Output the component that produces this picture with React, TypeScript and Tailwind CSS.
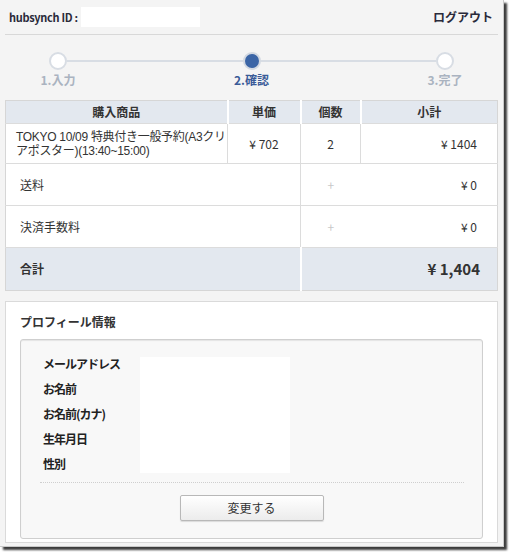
import React from 'react'

const font = "font-['Noto_Sans_CJK_JP','Liberation_Sans',sans-serif]"

const steps = [
  { label: '1.入力', active: false },
  { label: '2.確認', active: true },
  { label: '3.完了', active: false },
]

const profileLabels = ['メールアドレス', 'お名前', 'お名前(カナ)', '生年月日', '性別']

function Stepper() {
  return (
    <div className="mt-[17px] flex items-start px-[44px]">
      {steps.map((s, i) => (
        <React.Fragment key={s.label}>
          {i > 0 && <div className="mt-[8px] h-[2px] flex-1 bg-[#d8dde4]" />}
          <div className="flex w-[18px] flex-col items-center">
            <div
              className={
                s.active
                  ? 'h-[18px] w-[18px] rounded-full border-[2px] border-[#d3d9e2] bg-[#3b65a6]'
                  : 'h-[18px] w-[18px] rounded-full border-[2px] border-[#d8dde4] bg-white'
              }
            />
            <div
              className={
                s.active
                  ? 'mt-[3px] whitespace-nowrap text-[12px] leading-[14px] font-bold text-[#3a5b98]'
                  : 'mt-[3px] whitespace-nowrap text-[12px] leading-[14px] font-bold text-[#aab3c0]'
              }
            >
              {s.label}
            </div>
          </div>
        </React.Fragment>
      ))}
    </div>
  )
}

function OrderTable() {
  return (
    <table className="mt-[13px] w-[492px] table-fixed border-collapse border border-[#d6d6d6] text-[12px] text-[#333]">
      <colgroup>
        <col className="w-[222px]" />
        <col className="w-[73px]" />
        <col className="w-[60px]" />
        <col className="w-[137px]" />
      </colgroup>
      <thead>
        <tr className="h-[23px] bg-[#e3e8ef] font-bold">
          <th className="border-r-2 border-white">購入商品</th>
          <th className="border-r-2 border-white">単価</th>
          <th className="border-r-2 border-white">個数</th>
          <th>小計</th>
        </tr>
      </thead>
      <tbody className="bg-white">
        <tr className="h-[40px] border-t border-[#dcdcdc]">
          <td className="border-r border-[#dcdcdc] pl-[10px] font-['Liberation_Sans','Noto_Sans_CJK_JP',sans-serif] leading-[14px] tracking-[-0.3px] whitespace-nowrap">
            TOKYO 10/09 特典付き一般予約(A3クリ
            <br />
            アポスター)(13:40~15:00)
          </td>
          <td className="border-r border-[#dcdcdc] text-center">¥ 702</td>
          <td className="border-r border-[#dcdcdc] text-center">2</td>
          <td className="pr-[20px] text-right">¥ 1404</td>
        </tr>
        <tr className="h-[42px] border-t border-[#dcdcdc]">
          <td colSpan={2} className="border-r border-[#dcdcdc] pl-[14px]">送料</td>
          <td className="text-center text-[#c8c8c8]">+</td>
          <td className="pr-[20px] text-right">¥ 0</td>
        </tr>
        <tr className="h-[42px] border-t border-[#dcdcdc]">
          <td colSpan={2} className="border-r border-[#dcdcdc] pl-[14px]">決済手数料</td>
          <td className="text-center text-[#c8c8c8]">+</td>
          <td className="pr-[20px] text-right">¥ 0</td>
        </tr>
        <tr className="h-[43px] border-t border-[#dcdcdc] bg-[#e3e8ef] font-bold">
          <td colSpan={2} className="border-r-2 border-white pl-[14px]">合計</td>
          <td colSpan={2} className="pr-[17px] text-right text-[15px]">¥ 1,404</td>
        </tr>
      </tbody>
    </table>
  )
}

function Profile() {
  return (
    <div className="mt-[10px] border border-[#dadada] bg-white px-[14px] pt-[12px] pb-[3px]">
      <h2 className="text-[12px] leading-[16px] font-bold text-[#333]">プロフィール情報</h2>
      <div className="mt-[9px] rounded-[3px] border border-[#cfcfcf] bg-[#f8f8f8] pt-[11px] pb-[17px] shadow-[inset_0_1px_1px_rgba(0,0,0,0.08)]">
        <div className="flex pl-[22px]">
          <div className="w-[97px]">
            {profileLabels.map((l) => (
              <div key={l} className="h-[25px] text-[12px] leading-[25px] font-bold tracking-[-1px] text-[#222]">
                {l}
              </div>
            ))}
          </div>
          <div className="mt-[6px] h-[116px] w-[150px] bg-white" />
        </div>
        <div className="mt-[6px] ml-[19px] mr-[18px] border-t border-dotted border-[#cfcfcf]" />
        <div className="mt-[12px] flex justify-center">
          <button className="h-[26px] w-[144px] rounded-[2px] border border-[#b8b8b8] bg-gradient-to-b from-white to-[#ececec] text-[12px] text-[#333] shadow-[0_1px_1px_rgba(0,0,0,0.12)]">
            変更する
          </button>
        </div>
      </div>
    </div>
  )
}

export default function App() {
  return (
    <div className={`h-[552px] w-[509px] overflow-hidden bg-white ${font}`}>
      <div className="h-[547px] w-[504px] overflow-hidden border-r border-b border-[#c9c9c9] bg-[#f4f4f4] px-[5px] shadow-[3px_3px_2px_#3c3c3c]">
        <header className="flex h-[35px] w-[493px] items-center justify-between border-b border-[#d8d8d8] pl-[4px] pr-[5px] text-[#2a2a3a]">
          <div className="flex items-center">
            <span className="text-[11px] font-bold tracking-[-0.3px]">hubsynch ID :</span>
            <span className="ml-[3px] h-[20px] w-[119px] bg-white" />
          </div>
          <span className="text-[12px] font-bold">ログアウト</span>
        </header>
        <Stepper />
        <OrderTable />
        <Profile />
      </div>
    </div>
  )
}
